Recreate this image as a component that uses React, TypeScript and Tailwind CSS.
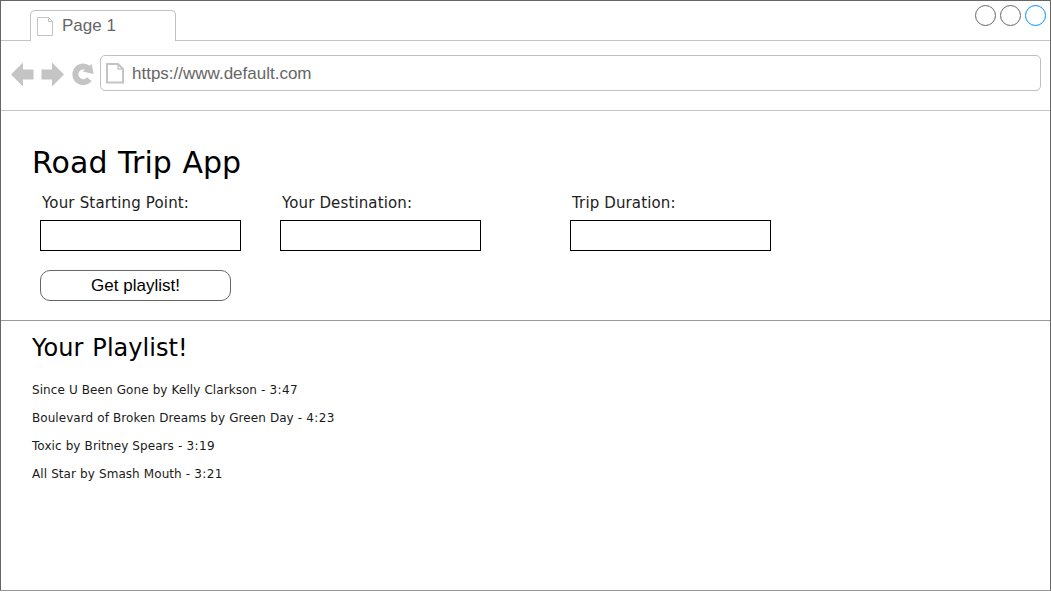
import React from "react";

const fields = [
  { label: "Your Starting Point:", box: "w-[240px]", text: "tracking-[0.17px]" },
  { label: "Your Destination:", box: "w-[290px]", text: "tracking-[0.13px]" },
  { label: "Trip Duration:", box: "w-[201px]", text: "tracking-[0.13px]" },
];

const songs = [
  { name: "Since U Been Gone by Kelly Clarkson -", time: "3:47" },
  { name: "Boulevard of Broken Dreams by Green Day -", time: "4:23" },
  { name: "Toxic by Britney Spears -", time: "3:19" },
  { name: "All Star by Smash Mouth -", time: "3:21" },
];

function TabBar() {
  return (
    <header className="flex h-10">
      <div className="w-[29px] border-b border-[#c4c4c4]" />
      <div className="mt-[9px] flex w-[146px] rounded-t-[5px] border border-b-0 border-[#c0c0c0] pl-[6px]">
        <svg className="mt-[6px] h-[19px] w-[17px]" viewBox="0 0 17 19" fill="none" stroke="#c4c4c4">
          <path d="M0.5 0.5H11.5L15.5 4.5V18.5H0.5ZM11.5 0.5V4.5H15.5" />
        </svg>
        <span className="ml-[8px] mt-[3px] text-[17px] leading-6 text-[#666]">Page 1</span>
      </div>
      <div className="flex flex-1 justify-end gap-[4px] border-b border-[#c4c4c4] pr-[4px] pt-[4px]">
        <i className="size-[21px] rounded-full border border-[#666]" />
        <i className="size-[21px] rounded-full border border-[#666]" />
        <i className="size-[21px] rounded-full border border-[#008cff]" />
      </div>
    </header>
  );
}

function Toolbar() {
  return (
    <nav className="flex h-[70px] border-b border-[#c4c4c4] pl-[10px] pt-[14px]">
      <svg className="mt-[6px] h-[26px] w-[89px] shrink-0" viewBox="0 0 89 26" fill="#c4c4c4">
        <path d="M0 13.5L12 1.5V8.5H22.5V18.5H12V25.5Z" />
        <path d="M53 13.5L41 1.5V8.5H30.5V18.5H41V25.5Z" />
        <path d="M78.3 18.2A7.8 7.8 0 1 1 77.2 7.4" fill="none" stroke="#c4c4c4" strokeWidth="6" />
        <path d="M80.7 3L82.7 12.9L71.7 10.6Z" />
      </svg>
      <div className="flex h-9 w-[941px] rounded-[5px] border border-[#c0c0c0] pl-[5px]">
        <svg className="mt-[7px] h-[21px] w-[18px]" viewBox="0 0 18 21" fill="none" stroke="#c4c4c4" strokeWidth="2">
          <path d="M1 1H12L17 6V19.5H1Z" />
          <path d="M12 1V6H17" strokeWidth="1.3" />
        </svg>
        <span className="ml-[8px] mt-[6px] text-[17px] leading-6 text-[#666]">https://www.default.com</span>
      </div>
    </nav>
  );
}

export default function App() {
  return (
    <div className="h-[601px] w-[1051px] overflow-hidden bg-white font-['Liberation_Sans',Arial,sans-serif] text-black">
      <div className="flex h-[591px] flex-col border border-[#666] border-b-[#999]">
        <TabBar />
        <Toolbar />
        <section className="h-[210px] border-b border-[#999] pl-[31px] pt-[32px]">
          <h1 className="h-[50px] font-['DejaVu_Sans',sans-serif] text-[30px] leading-10 tracking-[0.08px] [word-spacing:0.8px]">
            Road Trip App
          </h1>
          <div className="flex pl-[8px]">
            {fields.map((field) => (
              <label key={field.label} className={field.box}>
                <span className={"block h-[27px] pl-[2px] font-['DejaVu_Sans',sans-serif] text-[15px] leading-5 text-[#222] " + field.text}>
                  {field.label}
                </span>
                <input className="block h-[31px] w-[201px] border border-black px-2 outline-none" />
              </label>
            ))}
          </div>
          <button className="ml-[8px] mt-[19px] block h-[31px] w-[191px] rounded-[10px] border border-[#666] text-[17px] leading-[29px]">
            Get playlist!
          </button>
        </section>
        <section className="pl-[31px] pt-[11px] font-['DejaVu_Sans',sans-serif]">
          <h2 className="h-[44px] text-[24px] leading-8 tracking-[0.04px] [word-spacing:1.3px]">Your Playlist!</h2>
          <ul className="text-[12px] leading-7 tracking-[0.06px] text-[#1a1a1a] [word-spacing:0.2px]">
            {songs.map((song) => (
              <li key={song.name}>
                {song.name} <span className="tracking-[0.4px]">{song.time}</span>
              </li>
            ))}
          </ul>
        </section>
      </div>
    </div>
  );
}
